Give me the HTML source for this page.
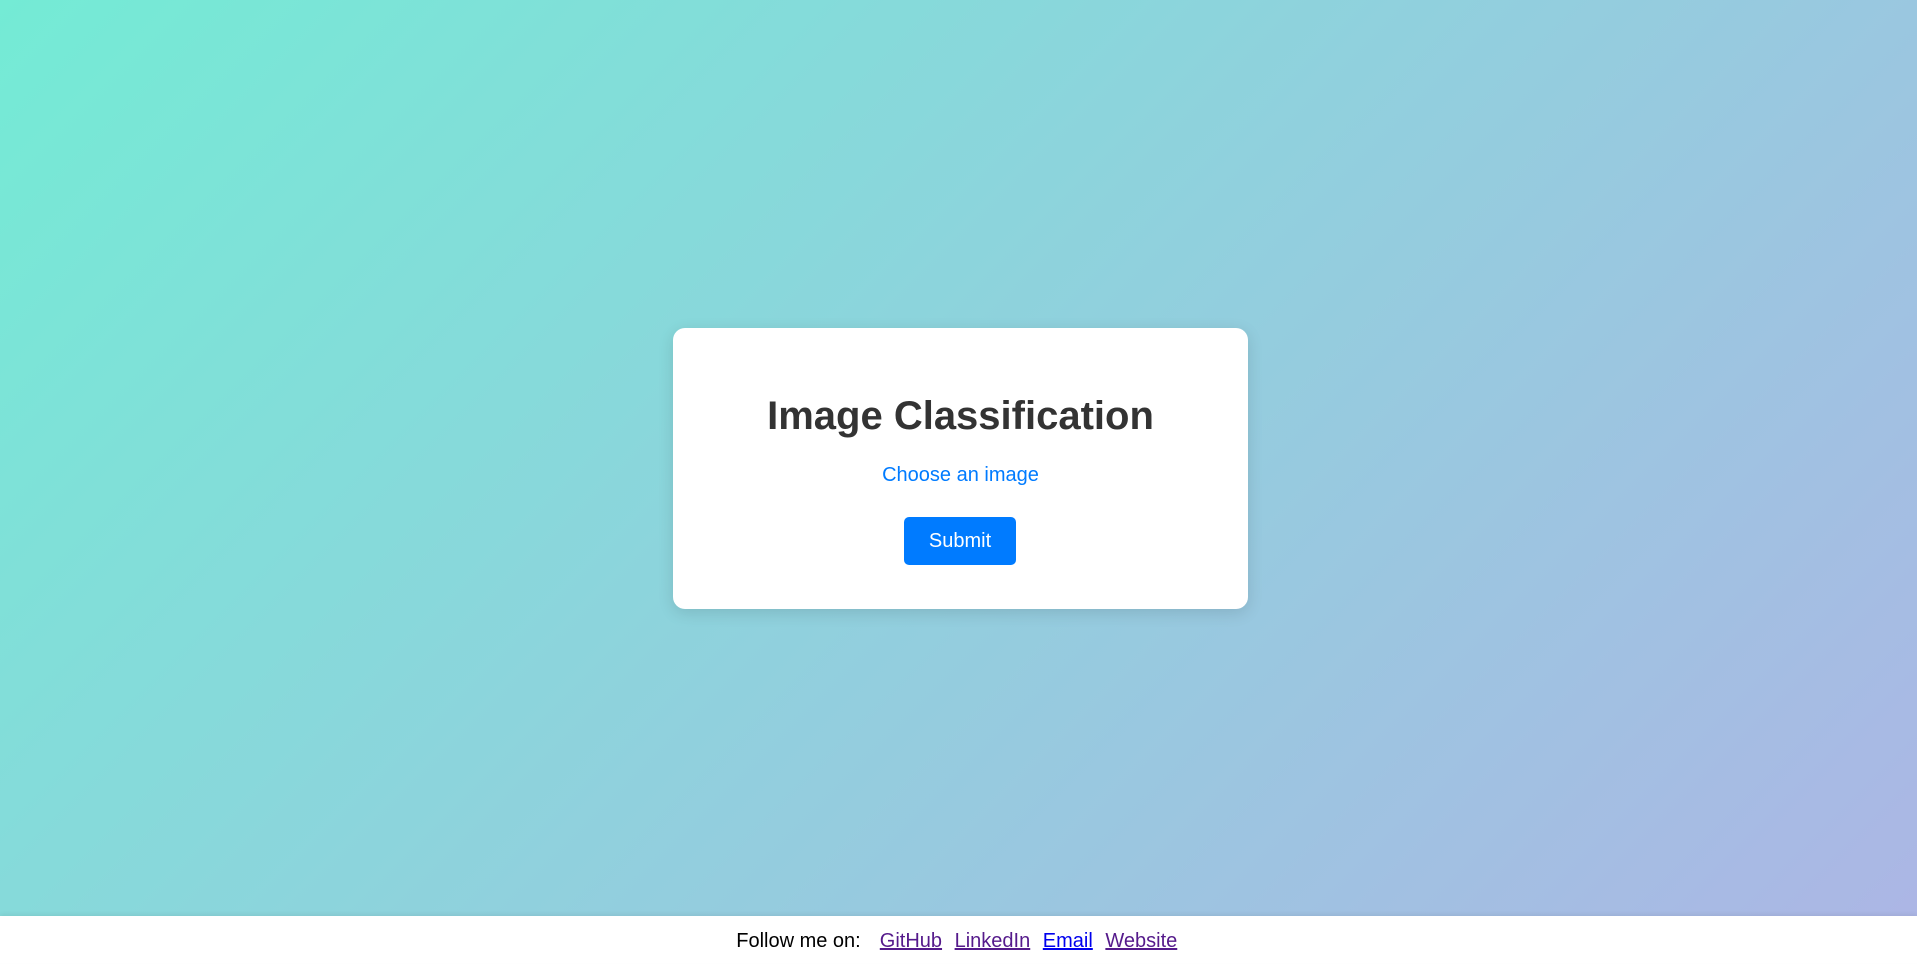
<!DOCTYPE html>
<html><head><style>
html,body{margin:0;padding:0;width:1917px;height:963px;overflow:hidden;font-family:"Liberation Sans",Arial,sans-serif;}
.bg{position:absolute;left:0;top:0;width:1917px;height:916px;background:linear-gradient(135deg,#74ebd5 0%,#acb6e5 100%);}
.card{position:absolute;left:673px;top:328px;width:575px;height:281px;background:#fff;border-radius:12px;box-shadow:0 4px 16px rgba(0,0,0,0.12);text-align:center;}
h1{margin:0;position:absolute;top:65px;left:0;right:0;font-size:40px;font-weight:bold;color:#333;line-height:46px;}
.choose{position:absolute;top:135px;left:0;right:0;font-size:20px;color:#007bff;line-height:24px;}
.btn{position:absolute;left:231px;top:189px;width:112px;height:48px;background:#007bff;color:#fff;border-radius:5px;font-size:20px;line-height:48px;}
.footer{position:absolute;left:0;top:916px;width:1917px;height:47px;background:#fff;box-shadow:0 -2px 4px rgba(0,0,0,0.06);text-align:center;font-size:20px;line-height:51px;color:#000;}
.footer a{color:#551a8b;text-decoration:underline;margin:0 3.5px;}
.footer a.e{color:#0000ee;}
.sp{display:inline-block;width:10px;}
</style></head><body>
<div class="bg"></div>
<div class="card">
<h1>Image Classification</h1>
<div class="choose">Choose an image</div>
<div class="btn">Submit</div>
</div>
<div class="footer">Follow me on:<span class="sp"></span> <a>GitHub</a> <a>LinkedIn</a> <a class="e">Email</a> <a>Website</a></div>
</body></html>
